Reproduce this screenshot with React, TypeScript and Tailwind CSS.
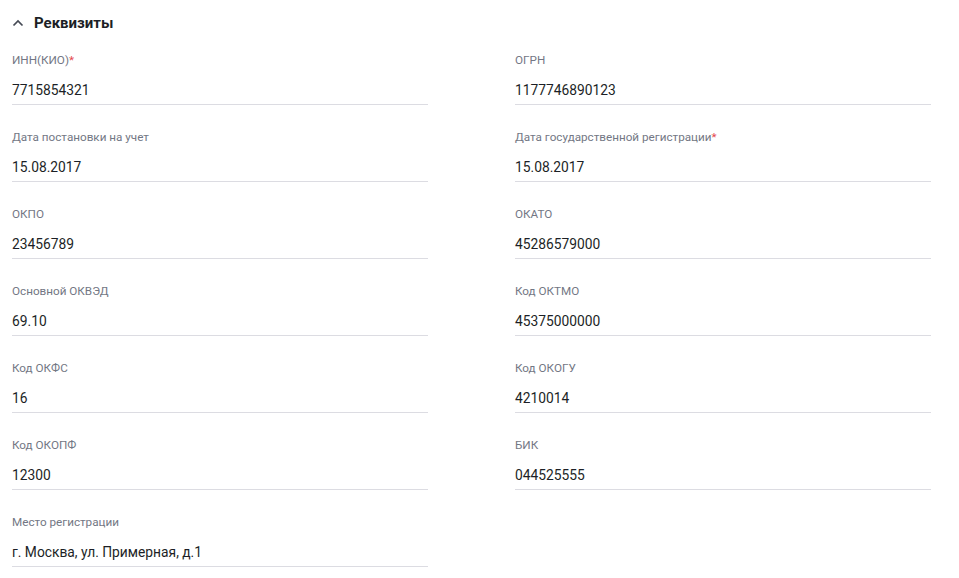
import React from "react";

type Field = {
  label: string;
  value: string;
  required?: boolean;
};

const fields: Field[] = [
  { label: "ИНН(КИО)", value: "7715854321", required: true },
  { label: "ОГРН", value: "1177746890123" },
  { label: "Дата постановки на учет", value: "15.08.2017" },
  { label: "Дата государственной регистрации", value: "15.08.2017", required: true },
  { label: "ОКПО", value: "23456789" },
  { label: "ОКАТО", value: "45286579000" },
  { label: "Основной ОКВЭД", value: "69.10" },
  { label: "Код ОКТМО", value: "45375000000" },
  { label: "Код ОКФС", value: "16" },
  { label: "Код ОКОГУ", value: "4210014" },
  { label: "Код ОКОПФ", value: "12300" },
  { label: "БИК", value: "044525555" },
  { label: "Место регистрации", value: "г. Москва, ул. Примерная, д.1" },
];

const FieldView: React.FC<{ field: Field }> = ({ field }) => {
  return (
    <div className="flex flex-col">
      <div className="h-4 text-[11.7px] leading-4 text-[#737784]">
        {field.label}
        {field.required && <span className="text-[#e5484d]">*</span>}
      </div>
      <div className="mt-3 h-5 text-[13.8px] leading-5 text-[#1c1f26]">
        {field.value}
      </div>
      <div className="mt-[4px] h-px bg-[#dcdce2]"></div>
    </div>
  );
};

export default function App() {
  return (
    <div
      className="w-[959px] h-[578px] bg-white pl-3 pr-7 overflow-hidden"
      style={{ fontFamily: "Roboto, 'Noto Sans', sans-serif" }}
    >
      {/* Заголовок секции */}
      <div className="h-[46px] flex items-center">
        <svg width="12" height="8" viewBox="0 0 12 8" className="mr-[10px]">
          <path d="M1.5 6.5 L6 2 L10.5 6.5" fill="none" stroke="#454a55" strokeWidth="1.7" />
        </svg>
        <h2 className="text-[15px] font-bold text-[#1c1f26]">Реквизиты</h2>
      </div>

      <div className="mt-[6px] grid grid-cols-[416px_416px] gap-x-[87px] gap-y-[24px]">
        {fields.map((f) => (
          <FieldView key={f.label} field={f} />
        ))}
      </div>
    </div>
  );
}
